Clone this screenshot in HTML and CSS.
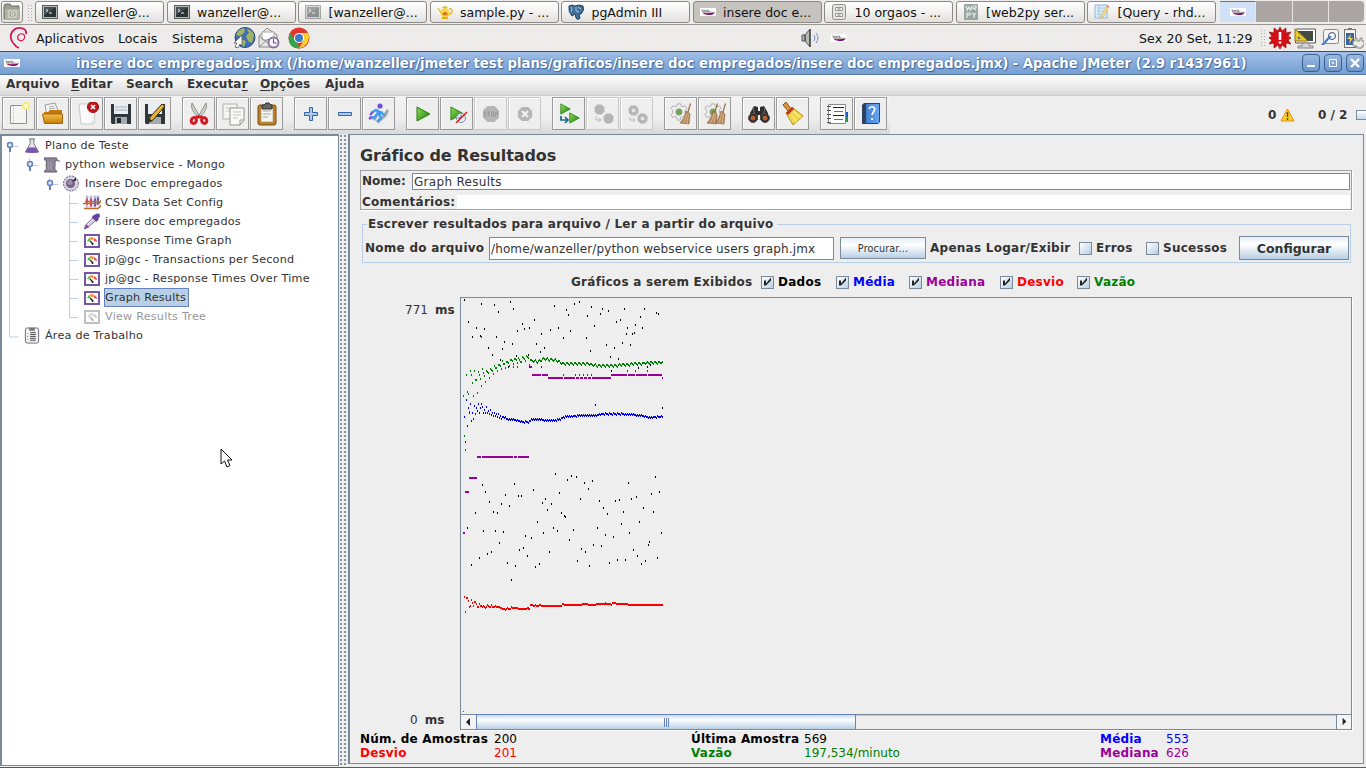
FILE: index.html
```html
<!DOCTYPE html>
<html lang="pt-BR">
<head>
<meta charset="utf-8">
<title>Apache JMeter</title>
<link rel="stylesheet" href="styles.css">
</head>
<body>
<svg class="defs" aria-hidden="true">
  <defs>
    <linearGradient id="gold" x2="0" y2="1"><stop stop-color="#f6c04c"/><stop offset="1" stop-color="#c77b08"/></linearGradient>
    <linearGradient id="grn" x2="1" y2="1"><stop stop-color="#8be04e"/><stop offset="1" stop-color="#1d7a0c"/></linearGradient>
    <linearGradient id="blu" x2="1" y2="0"><stop stop-color="#3f7fd6"/><stop offset="1" stop-color="#6aa6f0"/></linearGradient>
    <symbol id="term" viewBox="0 0 16 16"><rect x=".5" y="1.500" width="15" height="13" fill="#b9bbb6" stroke="#5c605b"/><rect x="2" y="3" width="12" height="10" fill="#2a3436"/><path d="M2 11V3h12z" fill="#465356"/><path d="M4 5l2 1.500-2 1.500M7 9h3" fill="none" stroke="#e8eeee"/></symbol>
    <symbol id="feather" viewBox="0 0 16 16"><rect y="4" width="16" height="8" fill="#fff"/><path d="M1 5l3 1 4-.5 2 2 5 .5-3 1.500-9-1z" fill="#b9b4b4"/><path d="M2 6l1 2M5 6v2M8 6l1 2" stroke="#777" stroke-width=".8"/><path d="M2 8.500q6 1.500 13 0-3 3-7 2.500-4-.5-6-2.500z" fill="#a01068"/><path d="M7 9.500q5 .5 8-1-3 3-7 2.500z" fill="#64108a"/></symbol>
    <symbol id="meter" viewBox="0 0 16 14"><rect x="1" y="1" width="14" height="12" fill="#fff" stroke="#7556a8" stroke-width="2"/><path d="M3 7l2-3 1.500 1.500-1 2z" fill="#41c34b"/><path d="M5 4q3-2 5 0L9 6.500 6.500 5.500z" fill="#f49a38"/><path d="M10 4q3 1 3 4l-3-1z" fill="#ef5350"/><path d="M6 7l3 3" stroke="#222" stroke-width="1.300"/><circle cx="8.500" cy="10" r="1" fill="#222"/></symbol>
    <symbol id="handle" viewBox="0 0 8 12"><circle cx="4" cy="4" r="2.500" fill="#dfe9f7" stroke="#6382bf" stroke-width="1.500"/><path d="M4 6v5" stroke="#6382bf" stroke-width="2"/></symbol>
    <symbol id="stop" viewBox="0 0 18 18"><path d="M5.500 1h7L17 5.500v7L12.500 17h-7L1 12.500v-7z" fill="#b5b5b5"/></symbol>
    <symbol id="play" viewBox="0 0 15 16"><path d="M1 1l13 7L1 15z" fill="url(#grn)" stroke="#277f17"/></symbol>
    <symbol id="gear" viewBox="0 0 20 20"><path d="M8 1h4l.5 2.500 2 .8L17 3l2 3-2 2v3l2 2-2.500 3-2.500-1-2 1-.5 3H8l-.5-3-2-1L3 16l-2-3 2-2V8L1 6l2.500-3L6 4.300l1.500-.8z" fill="#eee" stroke="#aaa"/><circle cx="10" cy="10" r="3.500" fill="#69ad45" stroke="#999"/></symbol>
    <symbol id="broom" viewBox="0 0 12 22"><path d="M11 0l1 1-3 10-1-1z" fill="#9b6b3c"/><path d="M7 8l4 3-1 10-9-1q5-5 6-12z" fill="#b98e62" stroke="#80592f" stroke-width=".6"/><path d="M8 10l-3 10M9.500 11L8 21" stroke="#e0bd93" stroke-width=".7"/></symbol>
  </defs>
</svg>

<header class="tasks">
  <div class="desk"><svg width="18" height="18" viewBox="0 0 18 18"><path d="M1 3l1-2h5l1 2h8v13H1z" fill="#9b9f8f" stroke="#6c705f"/><rect x="2" y="6" width="14" height="10" fill="#b2b6a5"/><rect x="6" y="8" width="7" height="6" fill="#8d917f" stroke="#e5e7dd"/><circle cx="9.500" cy="11" r="1.500" fill="none" stroke="#fff"/></svg></div>
  <i class="grip"></i>
  <div class="task"><svg><use href="#term"/></svg><span>wanzeller@...</span></div>
  <div class="task"><svg><use href="#term"/></svg><span>wanzeller@...</span></div>
  <div class="task dim"><svg><use href="#term"/></svg><span>[wanzeller@...</span></div>
  <div class="task"><svg viewBox="0 0 16 16"><path d="M1 5q0-1 2 2l1 2M12 5q3-1 3 2t-4 4" fill="none" stroke="#e4bd2e" stroke-width="1.500"/><ellipse cx="8" cy="9" rx="4.500" ry="5" fill="#f5d64b"/><path d="M5 4q3-4 6 0z" fill="#e8b923"/><path d="M5 10q3-4 6 0-3 3-6 0z" fill="#e07018"/><rect x="5" y="13" width="6" height="2" fill="#e2ad1e"/></svg><span>sample.py - ...</span></div>
  <div class="task"><svg viewBox="0 0 16 16"><path d="M1 2q3-2 6 0 4-2 8 0 2 4-2 8H11l1 4q-2 3-4 0L7 10 4 12Q0 8 1 2z" fill="#40719b" stroke="#29445e"/><path d="M3 3q2 2 0 5M8 3v4l3 1M10 3l3 2" fill="none" stroke="#a7c5dd"/></svg><span>pgAdmin III</span></div>
  <div class="task on"><svg><use href="#feather"/></svg><span>insere doc e...</span></div>
  <div class="task"><svg viewBox="0 0 16 16"><rect x="1.500" y=".5" width="13" height="15" rx="2" fill="#e5e5e2" stroke="#8e908b"/><path d="M4.500 3.500h7v3h-7zM4.500 9.500h7v3h-7z" fill="#fafafa" stroke="#969893"/><path d="M6.500 5h3M6.500 11h3" stroke="#777"/></svg><span>10 orgaos - ...</span></div>
  <div class="task"><svg viewBox="0 0 16 16"><rect x="1" width="14" height="16" rx="1" fill="#98a5a1"/><path d="M3 2l1.500 4L6 3l1.500 3L9 2M10 2h3v2h-3l3 2M4 14V9h3v2H4M9 9l2 2 2-2M11 11v3" fill="none" stroke="#e7ecea" stroke-width="1.200"/></svg><span>[web2py ser...</span></div>
  <div class="task"><svg viewBox="0 0 16 16"><rect x="1" y="1" width="12" height="13" fill="#dcebf7" stroke="#95b8d6"/><path d="M3 4h8M3 7h7M3 10h5M5 2v11" stroke="#a9cae5"/><path d="M7 12l6-10 2 1-6 10-3 1z" fill="#f6df8e" stroke="#ceb161" stroke-width=".7"/><path d="M13 2l2 1" stroke="#df8b8b" stroke-width="2"/></svg><span>[Query - rhd...</span></div>
  <div class="pager"><b><svg><use href="#feather"/></svg></b><b></b><b></b><b></b></div>
</header>

<nav class="panel">
  <svg class="deb" width="20" height="24" viewBox="0 0 20 24"><path d="M10 14q-2-1-1-4 1-3 5-2 3 2 1 5-2 3-5 1" fill="none" stroke="#d70a53" stroke-width="1.100"/><path d="M17 8q1-5-5-6Q5 1 2 8q-1 6 3 10 2 3 5 4" fill="none" stroke="#d70a53" stroke-width="1.700"/></svg>
  <span class="m1">Aplicativos</span><span class="m2">Locais</span><span class="m3">Sistema</span>
  <svg class="l1" width="22" height="22" viewBox="0 0 22 22"><circle cx="11" cy="10.500" r="10" fill="#426fb0" stroke="#27497b"/><path d="M4 4q5-4 7-2l-1 4-4 3-4-1zM13 2q5 1 7 6l-2 8-4-2-2-5 3-3zM7 12l5 2-2 6-4-3z" fill="#a2b566"/><path d="M8 8v11l-2-2-2 4-3-1 2-4H0z" fill="#fff" stroke="#555" stroke-width=".8"/></svg>
  <svg class="l2" width="22" height="22" viewBox="0 0 22 22"><path d="M1 9l8-8 10 7v12H1z" fill="#e8e8e5" stroke="#858782"/><path d="M4 5h12v8H4z" fill="#fff" stroke="#aaa"/><path d="M1 20l9-8 9 8M1 9l9 7" fill="none" stroke="#8f918c"/><circle cx="15.500" cy="15.500" r="5" fill="#f7f4fb" stroke="#8b719f" stroke-width="1.800"/><path d="M15.500 12v4h3" fill="none" stroke="#624d70"/></svg>
  <svg class="l3" width="22" height="22" viewBox="0 0 22 22"><circle cx="11" cy="11" r="10.500" fill="#e2352b"/><path d="M2 6l6 8 4 7.500Q1 22 .5 11z" fill="#35a44c"/><path d="M11 6h9.500Q23 18 11 21.500l4.500-8z" fill="#fbd22f"/><circle cx="11" cy="11" r="5" fill="#fff"/><circle cx="11" cy="11" r="4" fill="#3f79c5"/></svg>
  <svg class="l4" width="20" height="20" viewBox="0 0 20 20"><path d="M1 7h3l5-6v18l-5-6H1z" fill="#b8bab5" stroke="#555753"/><path d="M4 7v6M9 1v18" stroke="#4d504c" stroke-width="1.600"/><path d="M13 7q2 3 0 6M15 5q4 5 0 10" fill="none" stroke="#6b8fc2"/></svg>
  <svg class="l5" width="16" height="16"><use href="#feather"/></svg>
  <span class="clock">Sex 20 Set, 11:29</span><i class="grip g2"></i>
  <svg class="l6" width="22" height="22" viewBox="0 0 22 22"><path d="M11 0l2 4 4-3v5l5-1-3 4 3 2-3 2 3 4-5-1v5l-4-3-2 4-2-4-4 3v-5l-5 1 3-4-3-2 3-2-3-4 5 1V1l4 3z" fill="#d40f16" stroke="#930b10" stroke-width=".7"/><path d="M11 5v8M11 14.500v2" stroke="#fff" stroke-width="2.600"/></svg>
  <svg class="l7" width="22" height="21" viewBox="0 0 22 21"><path d="M1.500 1h20v14h-20z" fill="#fff" stroke="#555"/><path d="M4 3h15v10H4z" fill="#454b40"/><path d="M1 1l13 12H1z" fill="#e9c929" stroke="#8f7710"/><path d="M4 8l3 3H4z" fill="#665"/><path d="M8 15h7v3h4v2H4v-2h4z" fill="#d3d3d0" stroke="#888"/></svg>
  <svg class="l8" width="20" height="20" viewBox="0 0 20 20"><rect x="3.500" y="1.500" width="15" height="14" rx="2" fill="#f5f5f5" stroke="#888"/><circle cx="12" cy="8" r="3.500" fill="#f5f5f5" stroke="#3f4f68"/><path d="M12 8l-8 9H1l8-9z" fill="#467bc1"/></svg>
  <svg class="l9" width="21" height="21" viewBox="0 0 21 21"><rect x="1.500" y="1.500" width="11" height="18" fill="#f5f5f2" stroke="#75786f"/><rect x="3" y="5" width="8" height="12" fill="#3a66a6"/><path d="M5 0h4v2H5z" fill="#77796f"/><path d="M8 6l-4 5h3l-1 5 4-6H7z" fill="#f9cd4c"/><path d="M12 13v-3h2v3h3v-3h2v3h2v5h-2v2h-5v-2h-4v-5z" fill="#ecece9" stroke="#888"/></svg>
</nav>

<div class="titlebar">
  <svg width="16" height="16"><use href="#feather"/></svg>
  <h1>insere doc empregados.jmx (/home/wanzeller/jmeter test plans/graficos/insere doc empregados/insere doc empregados.jmx) - Apache JMeter (2.9 r1437961)</h1>
  <div class="wins"><i><svg viewBox="0 0 16 16"><path d="M4 11h8" stroke="#fff" stroke-width="2"/></svg></i><i><svg viewBox="0 0 16 16"><path d="M4.500 4.500h7v7h-7zM7.500 7.500h1v1h-1z" fill="none" stroke="#fff"/></svg></i><i><svg viewBox="0 0 16 16"><path d="M4 4l8 8M12 4l-8 8" stroke="#fff" stroke-width="2.400"/></svg></i></div>
</div>

<div class="menubar"><span class="a">Arquivo</span><span class="b"><u>E</u>ditar</span><span class="c">Search</span><span class="d">Executa<u>r</u></span><span class="e"><u>O</u>pções</span><span class="f">Ajuda</span></div>

<div class="toolbar">
  <div class="group">
    <button><svg viewBox="0 0 24 24"><path d="M3.500 3.500h16v18h-16z" fill="#f5f5f4" stroke="#8f918c"/><path d="M6.500 4v17" stroke="#bbb" stroke-dasharray="1 1"/><circle cx="19" cy="4" r="4" fill="#f7eb81"/><circle cx="19" cy="4" r="2" fill="#fffbd8"/></svg></button>
    <button><svg viewBox="0 0 24 24"><path d="M4 3l10-2 4 10-12 3z" fill="#f5f5f5" stroke="#888" stroke-width=".8"/><path d="M8 5l5-1M8 7l6-1" stroke="#aaa"/><path d="M3 10h4l2-2h12v13H3z" fill="#c2780d"/><path d="M1.500 12h20v9.500h-18z" fill="url(#gold)" stroke="#a3670b"/></svg></button>
    <button><svg viewBox="0 0 24 24"><path d="M4 2h16l-1 20H6z" fill="#fafafa" stroke="#c8c8c8"/><path d="M14 21q5-1 6-7l1 7z" fill="#e0e0e0"/><circle cx="18" cy="5" r="5.500" fill="#c3161b" stroke="#961015"/><path d="M16 3l4 4M20 3l-4 4" stroke="#fff" stroke-width="1.600"/></svg></button>
    <button><svg viewBox="0 0 24 24"><path d="M2 2h20v20H3l-1-1z" fill="#30363b"/><path d="M5 2h14v10H5z" fill="#e9eef2"/><path d="M6 5h12M6 8h12" stroke="#a5adb3"/><path d="M6 15h12v7H6z" fill="#a5aaad"/><path d="M8 16h4v5H8z" fill="#252a2e"/></svg></button>
    <button><svg viewBox="0 0 24 24"><path d="M2 2h20v20H3l-1-1z" fill="#30363b"/><path d="M5 2h14v10H5z" fill="#e9eef2"/><path d="M6 15h12v7H6z" fill="#a5aaad"/><path d="M6 20l1-5L19 2l3 2L10 18z" fill="#e8b42b" stroke="#322a16"/><path d="M6 20l1-3 2 2z" fill="#222"/></svg></button>
  </div>
  <div class="group">
    <button><svg viewBox="0 0 24 24"><path d="M5 1q-2 6 5 13l3 1zM19 1q2 6-5 13l-3 1z" fill="#d7d9d7" stroke="#888a85"/><ellipse cx="7" cy="18.500" rx="2.500" ry="3" fill="none" stroke="#d51a22" stroke-width="3" transform="rotate(25 7 18)"/><ellipse cx="17" cy="18.500" rx="2.500" ry="3" fill="none" stroke="#d51a22" stroke-width="3" transform="rotate(-25 17 18)"/><path d="M9 15h6" stroke="#d51a22" stroke-width="3"/></svg></button>
    <button><svg viewBox="0 0 24 24"><path d="M2 2h14v15H2z" fill="#f4f4f3" stroke="#b0b1ad"/><path d="M5 6h8M5 9h5" stroke="#c8c8c5"/><path d="M9 6h14v12l-4 5H9z" fill="#f9f9f8" stroke="#969893"/><path d="M12 10h8M12 13h8M12 16h5" stroke="#c3c4c0"/><path d="M19 23v-5h4z" fill="#fff" stroke="#969893"/></svg></button>
    <button><svg viewBox="0 0 24 24"><rect x="3" y="3" width="18" height="20" rx="2" fill="#be8122" stroke="#794c0d"/><path d="M6 6h12v14H6z" fill="#f4f4f1" stroke="#a49579" stroke-width=".7"/><path d="M8 9h8M8 12h8M8 15h5" stroke="#a9aaa5"/><path d="M7 3h2l2-2h3l2 2h1v4H7z" fill="#646863" stroke="#333"/></svg></button>
  </div>
  <div class="group">
    <button><svg viewBox="0 0 24 24"><path d="M10.500 5.500h3v5h5v3h-5v5h-3v-5h-5v-3h5z" fill="#acc8ea" stroke="#3465a4"/></svg></button>
    <button><svg viewBox="0 0 24 24"><path d="M5.500 10.500h13v3h-13z" fill="#acc8ea" stroke="#3465a4"/></svg></button>
    <button><svg viewBox="0 0 24 24"><path d="M11 22l2-6 3-3 4-6 2 2-3 6-3 2zM5 17l6-3-3 5z" fill="#a5a5a5"/><circle cx="13" cy="4" r="2.600" fill="#6a50e4"/><path d="M10 7l5 3-2 4-4-1z" fill="#5f8df0"/><path d="M4 11l5-3 3 2 4 1M13 10l5 3M10 12l-2 3-6 1M12 12l2 4-4 4" fill="none" stroke="#3f9df5" stroke-width="2.600"/><path d="M3 13l3-3M2 17l3-2" stroke="#8d4fe0" stroke-width="2.400"/></svg></button>
  </div>
  <div class="group">
    <button><svg viewBox="0 0 24 24"><use href="#play" x="5" y="4" width="15" height="16"/></svg></button>
    <button><svg viewBox="0 0 24 24"><use href="#play" x="5" y="4" width="14" height="15"/><circle cx="16" cy="16" r="4.500" fill="#e9f0f5" stroke="#88a"/><path d="M13 16h3v-3" stroke="#457" fill="none"/><path d="M11 21L22 10" stroke="#e02020" stroke-width="1.600"/></svg></button>
    <button class="off"><svg viewBox="0 0 24 24"><use href="#stop" x="3" y="3" width="18" height="18"/><path d="M7 10H5v2h2v2H5M8 10h3M9.500 10v4M12.500 10h2v4h-2zM16.500 15v-5h2v2.500h-2" fill="none" stroke="#999"/></svg></button>
    <button class="off"><svg viewBox="0 0 24 24"><use href="#stop" x="4" y="4" width="16" height="16"/><path d="M9 9l6 6M15 9l-6 6" stroke="#eee" stroke-width="2.400"/></svg></button>
  </div>
  <div class="group">
    <button><svg viewBox="0 0 24 24"><use href="#play" x="3" y="1" width="11" height="12"/><use href="#play" x="12" y="10" width="11" height="12"/><path d="M4 14v4h6m-2-3l3 3-3 3" fill="none" stroke="#196a86" stroke-width="1.700"/></svg></button>
    <button class="off"><svg viewBox="0 0 24 24"><use href="#stop" x="3" y="2" width="11" height="11"/><use href="#stop" x="12" y="11" width="11" height="11"/><path d="M5 14v4h5m-2-2l2 2-2 2" fill="none" stroke="#bbb"/></svg></button>
    <button class="off"><svg viewBox="0 0 24 24"><use href="#stop" x="3" y="3" width="11" height="11"/><use href="#stop" x="12" y="11" width="11" height="11"/><path d="M7 7l3 3M10 7l-3 3M16 15l3 3M19 15l-3 3" stroke="#eee" stroke-width="1.500"/><path d="M5 15v3h5m-2-2l2 2-2 2" fill="none" stroke="#bbb"/></svg></button>
  </div>
  <div class="group">
    <button><svg viewBox="0 0 24 24"><use href="#gear" x="1" y="1" width="18" height="18"/><use href="#broom" x="10" y="1" width="12" height="22"/></svg></button>
    <button><svg viewBox="0 0 24 24"><use href="#gear" x="1" y="1" width="18" height="18"/><use href="#broom" x="3" y="1" width="12" height="22"/><use href="#broom" x="11" y="1" width="12" height="22"/></svg></button>
  </div>
  <div class="group">
    <button><svg viewBox="0 0 24 24"><path d="M3 11l4-7 4 1v4h2V5l4-1 4 7v7h-8v-5h-2v5H3z" fill="#2d2d2c"/><path d="M6 6l2 8M18 6l-2 8" stroke="#737370"/><circle cx="6" cy="16" r="4.500" fill="#2a2a2a" stroke="#555"/><circle cx="18" cy="16" r="4.500" fill="#2a2a2a" stroke="#555"/><circle cx="6" cy="16" r="2.500" fill="#b8602f"/><circle cx="18" cy="16" r="2.500" fill="#b8602f"/></svg></button>
    <button><svg viewBox="0 0 24 24"><path d="M2 3l3-3 5 7-3 2z" fill="#db9541" stroke="#8d5316"/><path d="M5 11l6-6 11 9-10 9z" fill="#f1d749" stroke="#b39216"/><path d="M5 11l6-6 2 2-6 6z" fill="#c62e28"/><path d="M10 13l6 7M13 10l7 6" stroke="#fff2a0"/></svg></button>
  </div>
  <div class="group">
    <button><svg viewBox="0 0 24 24"><path d="M3.500 2.500h17v19h-17z" fill="#fff" stroke="#888"/><path d="M4 4v17" stroke="#555" stroke-width="4" stroke-dasharray="1 3"/><path d="M8 5.500h11M8 13.500h11" stroke="#222"/><path d="M9 9.500h9M9 17.500h9" stroke="#3b77d0"/><path d="M21 10h2v5h-2z" fill="#2458c5"/><path d="M21 15h2v5h-2z" fill="#1d9c38"/></svg></button>
    <button><svg viewBox="0 0 24 24"><path d="M3 3l2-2h16v19l-2 2H3z" fill="#2e435b"/><path d="M7 2h13v19H7z" fill="url(#blu)"/><path d="M10 7q1-3 4-2t1 4-2 4M13 16v2" fill="none" stroke="#fff" stroke-width="1.700"/></svg></button>
  </div>
  <div class="counts"><span class="n1">0</span><svg width="15" height="14" viewBox="0 0 15 14"><path d="M7.500 1L14 13H1z" fill="#fad32c" stroke="#ec8a0a" stroke-linejoin="round"/><path d="M7.500 4v5M7.500 10v2" stroke="#7a4a10" stroke-width="1.600"/></svg><span class="n2">0 / 2</span><i></i></div>
</div>

<main class="body">
  <aside class="tree">
    <svg class="lines" width="110" height="210" viewBox="0 0 110 210"><path d="M9.500 14v187h9M9.500 10.500h9M29.500 22v12M29.500 29.500h9M49.500 42v12M49.500 48.500h9M69.500 58v123.500h9M69.500 67.500h9M69.500 86.500h9M69.500 105.500h9M69.500 124.500h9M69.500 143.500h9M69.500 162.500h9" fill="none" stroke="#b8cfe5"/><use href="#handle" x="6" y="5" width="8" height="12"/><use href="#handle" x="26" y="24" width="8" height="12"/><use href="#handle" x="46" y="43" width="8" height="12"/></svg>
    <ul>
      <li class="d0"><svg viewBox="0 0 16 18"><path d="M6 2v5L1 16h14L10 7V2" fill="#e5e3ea" stroke="#777"/><path d="M4 11h8l3 5q-6 2-14 0z" fill="#7755b5"/><path d="M5 2h6" stroke="#666"/></svg><span>Plano de Teste</span></li>
      <li class="d1"><svg class="wide" viewBox="0 0 18 18"><path d="M1 2h13v2l-2 1v9l2 2v1H1v-1l2-2V5L1 4z" fill="#8b8493" stroke="#5e5866"/><path d="M5 6v8M8 6v8" stroke="#a39cad" stroke-width="1.500"/><path d="M12 11V6q3-3 5 0" fill="none" stroke="#867e90" stroke-width="1.500"/></svg><span>python webservice - Mongo</span></li>
      <li class="d2"><svg viewBox="0 0 16 16"><circle cx="8" cy="8" r="7.500" fill="#d7cfe2" stroke="#6e5c7e" stroke-dasharray="2 1"/><circle cx="7.500" cy="8" r="4.500" fill="#756285"/><circle cx="7" cy="7" r="2.500" fill="#9e8db0"/><path d="M9 6l4-4v3z" fill="#111"/></svg><span>Insere Doc empregados</span></li>
      <li class="d3"><svg class="wide" viewBox="0 0 18 16"><path d="M4 1v12M8 1v12M12 1v12M15 1v10" stroke="#c0bad3" stroke-width="2.600"/><path d="M4 4v6M8 4v8" stroke="#ce4571" stroke-width="2"/><path d="M12 4v8M15 3v7" stroke="#5d5cc2" stroke-width="2"/><path d="M0 9h16l2-3M1 14h14l3-3M2 7h14" fill="none" stroke="#bd6f2a" stroke-width="1.700"/></svg><span>CSV Data Set Config</span></li>
      <li class="d3"><svg class="wide" viewBox="0 0 18 18"><path d="M1 17l1-4L11 4l3 3-9 8z" fill="#ded5e8" stroke="#7d6b90"/><path d="M1 17l2-5 3 3z" fill="#774cad"/><path d="M10 3l5 5M12 5l3-3" stroke="#6343a0" stroke-width="4"/><circle cx="15" cy="3" r="2.500" fill="#6343a0"/></svg><span>insere doc empregados</span></li>
      <li class="d3"><svg class="met"><use href="#meter"/></svg><span>Response Time Graph</span></li>
      <li class="d3"><svg class="met"><use href="#meter"/></svg><span>jp@gc - Transactions per Second</span></li>
      <li class="d3"><svg class="met"><use href="#meter"/></svg><span>jp@gc - Response Times Over Time</span></li>
      <li class="d3"><svg class="met"><use href="#meter"/></svg><span class="sel">Graph Results</span></li>
      <li class="d3 gray"><svg class="met"><use href="#meter"/></svg><span>View Results Tree</span></li>
      <li class="d0"><svg viewBox="0 0 16 18"><rect x="1" y="1" width="14" height="16" rx="2" fill="#f2f2f5" stroke="#6c6573"/><path d="M5 1h6v3H5z" fill="#777"/><path d="M6 6h6M6 8h6M6 10h6M6 12h6M6 14h6" stroke="#444"/><path d="M3 7h1M3 10h1M3 13h1" stroke="#3aa63a"/></svg><span>Área de Trabalho</span></li>
    </ul>
    <svg class="cursor" width="13" height="20" viewBox="0 0 13 20"><path d="M1 1v15l3.500-3 2.500 6 3-1.500-2.500-5.500H12z" fill="#fff" stroke="#111"/></svg>
  </aside>
  <div class="splitter"></div>
  <section class="pane">
    <h2>Gráfico de Resultados</h2>
    <div class="namebox">
      <div class="row"><label class="x1">Nome:</label><div class="field">Graph Results</div></div>
      <div class="row com"><label class="x2">Comentários:</label><div class="blank"></div></div>
    </div>
    <div class="filebox">
      <div class="legend">Escrever resultados para arquivo / Ler a partir do arquivo</div>
      <div class="filerow">
        <label class="x3">Nome do arquivo</label><div class="field path">/home/wanzeller/python webservice users graph.jmx</div>
        <button class="btn small">Procurar...</button>
        <label class="x4">Apenas Logar/Exibir</label><i class="box"></i><label class="x5">Erros</label><i class="box"></i><label class="x6">Sucessos</label>
        <button class="btn conf">Configurar</button>
      </div>
    </div>
    <div class="shows">
      <label class="s0">Gráficos a serem Exibidos</label>
      <i class="box on"></i><label class="s1 black">Dados</label>
      <i class="box on"></i><label class="s2 blue">Média</label>
      <i class="box on"></i><label class="s3 purple">Mediana</label>
      <i class="box on"></i><label class="s4 red">Desvio</label>
      <i class="box on"></i><label class="s5 green">Vazão</label>
    </div>
    <div class="graph">
      <div class="axis"><div class="top"><span>771</span><b>ms</b></div><div class="bot"><span>0</span><b>ms</b></div></div>
      <div class="view">
        <svg id="plot" width="890" height="416" viewBox="18 9 2670 1248" shape-rendering="crispEdges"></svg>
        <div class="scroll"><i class="arr"><svg viewBox="0 0 15 14"><path d="M9 3v8L5 7z" fill="#222"/></svg></i><div class="thumb"></div><i class="arr r"><svg viewBox="0 0 15 14"><path d="M6 3v8l4-4z" fill="#222"/></svg></i></div>
      </div>
    </div>
    <div class="stats">
      <b class="black">Núm. de Amostras</b><span class="black">200</span><b class="black">Última Amostra</b><span class="black">569</span><b class="blue">Média</b><span class="blue">553</span>
      <b class="red">Desvio</b><span class="red">201</span><b class="green">Vazão</b><span class="green">197,534/minuto</span><b class="purple">Mediana</b><span class="purple">626</span>
    </div>
  </section>
</main>
<script src="plot.js"></script>
</body>
</html>
```
FILE: styles.css
```css
* { box-sizing: border-box; }
body { margin: 0; width: 1366px; height: 768px; overflow: hidden; background: #eee; color: #333; font: 12px "DejaVu Sans", sans-serif; display: flex; flex-direction: column; white-space: nowrap; }
.defs { position: absolute; width: 0; height: 0; }
svg { display: block; flex: none; }
button { font: inherit; padding: 0; margin: 0; }
u { text-underline-offset: 2px; }

.tasks { height: 25px; flex: none; display: flex; align-items: flex-start; padding-top: 1px; background: #edeceb; color: #111; border-bottom: 1px solid #999794; }
.desk { width: 22px; height: 22px; margin-left: 1px; border: 1px solid #8d8a86; border-radius: 3px; display: flex; align-items: center; justify-content: center; background: linear-gradient(#fff, #e5e3e1); }
.grip { width: 5px; height: 18px; margin: 3px 3px 0 4px; background: radial-gradient(circle, #aaa 30%, transparent 40%) 0 0 / 3px 3px; }
.task { width: 129px; height: 22px; margin-right: 2.500px; padding-left: 6px; border: 1px solid #8d8a86; border-radius: 3px; display: flex; align-items: center; background: linear-gradient(#fff, #f2f1f0 50%, #e3e1df); font-size: 12.500px; }
.task svg { width: 16px; height: 16px; margin-right: 7.500px; }
.task.on { background: #c6c3bf; }
.task.dim svg { opacity: .5; }
.pager { display: flex; width: 144px; height: 21px; margin-left: 1.500px; background: #aaa5a1; border-radius: 0 4px 4px 0; overflow: hidden; }
.pager b { flex: 1; border-right: 1px solid #e8e6e4; display: flex; align-items: center; justify-content: center; }
.pager b:last-child { border: 0; }
.pager b:first-child { background: #d0e0f7; border-top: 1px solid #4a7ab5; }
.pager svg { width: 16px; height: 16px; }

.panel { height: 26px; flex: none; display: flex; align-items: center; background: #edeceb; color: #111; font-size: 12.600px; }
.deb { margin-left: 9px; width: 20px; }
.m1 { margin-left: 7px; width: 82px; } .m2 { width: 54px; } .m3 { width: 62px; letter-spacing: .100px; }
.l1 { margin-right: 2px; } .l2 { margin-right: 8px; } .l3 { margin-right: 491px; } .l4 { margin-right: 10px; }
.l5 { margin-right: 292px; } .clock { width: 117px; letter-spacing: .100px; } .g2 { margin: 0 4px; }
.l6 { margin-right: 3px; } .l7 { margin-right: 4px; } .l8 { margin-right: 3px; }

.titlebar { height: 24px; flex: none; display: flex; align-items: center; border-top: 1px solid #3c4f6c; border-bottom: 1px solid #5478a8; background: linear-gradient(#a0bfe7, #769fd2); }
.titlebar > svg { margin-left: 4px; }
.titlebar h1 { margin: 0 0 0 56px; width: 1226px; font-size: 13.300px; letter-spacing: -.055px; font-weight: bold; color: #fff; text-shadow: 0 0 2px #3e669c, 1px 1px 1px #3e669c; }
.wins { display: flex; gap: 4px; }
.wins i { width: 18px; height: 18px; border: 1px solid #3a6090; border-radius: 4px; background: linear-gradient(#9ab9e1, #6d96ca); }
.wins svg { width: 16px; height: 16px; }

.menubar { height: 21px; flex: none; display: flex; align-items: center; padding: 0 0 3px 6px; border-bottom: 1px solid #ccc; background: linear-gradient(#fff, #dadada); font-weight: bold; letter-spacing: .150px; }
.menubar .a { width: 65px; } .menubar .b { width: 55px; } .menubar .c { width: 61px; } .menubar .d { width: 73px; } .menubar .e { width: 65px; }

.toolbar { height: 38px; flex: none; display: flex; align-items: flex-start; padding: 1px 0 0 2px; background: linear-gradient(90deg, transparent 890px, #eee 890px), linear-gradient(#f2f2f2, #eee 60%, #d9d9d9); }
.group { display: flex; gap: 1px; margin-right: 11px; }
.group button { width: 33px; height: 33px; border: 1px solid #999; background: #eee; display: flex; align-items: center; justify-content: center; box-shadow: inset 1px 1px #fff; }
.group button svg { width: 24px; height: 24px; }
.group button.off { border-color: #c8c8c8; }
.counts { margin-left: 370px; margin-top: 11px; display: flex; align-items: center; font-weight: bold; }
.n1 { width: 12px; } .n2 { margin-left: 23px; width: 38px; }
.counts i { width: 10px; height: 10px; border: 1px solid #7a8a99; border-right: 0; background: linear-gradient(#fff, #c5d8ec); }

.body { flex: 1; min-height: 0; display: flex; border-bottom: 1px solid #465f7c; }
.tree { position: relative; width: 339px; background: #fff; border: solid #7a8a99; border-width: 2px 1px 1px 2px; height: 632px; }
.lines { position: absolute; left: -2px; top: 0; }
.tree ul { list-style: none; margin: 0; padding: 0; }
.tree li { height: 19px; display: flex; align-items: center; position: relative; font-size: 11.200px; letter-spacing: .220px; }
.tree li svg { width: 16px; height: 17px; margin-right: 4px; }
.tree li svg.wide { width: 18px; margin: 0 4px 0 -1px; }
.tree li svg.met { height: 14px; margin-right: 5px; }
.d0 { padding-left: 22px; } .d1 { padding-left: 42px; } .d2 { padding-left: 61px; } .d3 { padding-left: 82px; }
.tree li.d0 svg { margin-right: 5px; }
.tree li.d2 svg { margin-right: 6px; }
.sel { background: #b8cfe5; border: 1px solid #6382bf; height: 19px; line-height: 17px; width: 85px; margin-left: -1px; }
.gray { color: #999; } .gray svg { filter: grayscale(1) opacity(.4); }
.cursor { position: absolute; left: 218px; top: 312px; }
.splitter { width: 9px; background: radial-gradient(circle, #8a929b 28%, transparent 45%) 4px 0 / 4px 4px repeat; background-color: #eee; }

.pane { flex: 1; height: 630px; margin-right: 2px; border: solid #7a8a99; border-width: 1px 1px 1px 2px; padding: 0 11px 0 10px; min-width: 0; }
h2 { margin: 11px 0 4px; height: 20px; line-height: 20px; font-size: 16px; letter-spacing: -.100px; font-weight: bold; }
.namebox { width: 992px; height: 40px; border: 1px solid #a0a0a0; box-shadow: 1px 1px #fff; padding: 1px 1px 0; margin-bottom: 14px; }
.row { display: flex; align-items: center; height: 18px; }
label, .legend { font-weight: bold; letter-spacing: .260px; }
.x1 { width: 50px; letter-spacing: 0; }
.field { flex: 1; height: 17px; line-height: 16px; border: 1px solid #7a8a99; background: #fff; padding-left: 1px; letter-spacing: .300px; }
.com { margin-top: 5px; height: 14px; }
.x2 { width: 95px; }
.blank { flex: 1; height: 14px; background: #fff; }
.filebox { width: 989px; height: 39px; margin-left: 2px; border: 1px solid #b8cfe5; }
.legend { width: 410px; margin: -8px 0 0 4px; height: 15px; line-height: 15px; padding-left: 1px; background: #eee; }
.filerow { display: flex; align-items: center; height: 24px; margin-top: 4px; }
.x3 { width: 126px; padding-left: 2px; }
.path { flex: none; width: 345px; height: 23px; line-height: 22px; margin-right: 6px; letter-spacing: .120px; }
.btn { border: 1px solid #7a8a99; background: linear-gradient(#e6eef7, #fff 35%, #b8cfe5); color: #333; height: 23px; text-align: center; }
.small { width: 86px; height: 22px; font-size: 9.600px; letter-spacing: .150px; margin-right: 4px; }
.x4 { width: 149px; } .x5 { width: 50px; margin-left: 4px; } .x6 { width: 75px; margin-left: 4px; }
.conf { width: 110px; height: 24px; font-weight: bold; font-size: 12.500px; margin-left: 1px; }
.box { flex: none; position: relative; width: 13px; height: 13px; border: 1px solid #7a8a99; background: linear-gradient(135deg, #fff, #b8cfe5); }
.box.on::after { content: ""; position: absolute; inset: 0; background: #222; clip-path: polygon(2px 4px, 4px 4px, 4px 7px, 9px 1px, 9px 4px, 4px 9px, 2px 9px); }
.shows { display: flex; align-items: center; height: 16px; margin: 11px 0 7px 211px; }
.shows label { padding-left: 4px; }
.s0 { width: 190px; } .shows .s0 { padding: 0; } .s1 { width: 62px; } .s2 { width: 60px; } .s3 { width: 78px; } .s4 { width: 64px; }
.black { color: #000; } .blue { color: #00f; } .purple { color: #909; } .red { color: #f00; } .green { color: #008000; }
.graph { display: flex; height: 433px; }
.axis { width: 100px; display: flex; flex-direction: column; justify-content: space-between; padding: 6px 0 3px; }
.axis div { display: flex; height: 14px; }
.axis span { margin-right: 7px; }
.top { margin-left: 45px; } .bot { margin-left: 50px; }
.view { width: 892px; border: 1px solid #7a8a99; box-shadow: 1px 1px #fff; }
.scroll { height: 15px; border-top: 1px solid #7a8a99; display: flex; box-shadow: inset 0 1px #b8cfe5; }
.arr { width: 15px; height: 14px; background: #f4f4f4; } .arr.r { margin-left: auto; border-left: 1px solid #7a8a99; }
.thumb { width: 380px; height: 15px; margin-top: -1px; border: 1px solid #6382bf; border-bottom-width: 0; background: linear-gradient(90deg, transparent 187px, #6382bf 187px 188px, transparent 188px 189px, #6382bf 189px 190px, transparent 190px 191px, #6382bf 191px 192px, transparent 192px) 0 3px / 100% 9px no-repeat, linear-gradient(#c8daec, #fff 35%, #b8cfe5); }
.stats { display: grid; grid-template-columns: 134px 197px 113px 296px 66px 80px; grid-auto-rows: 14px; line-height: 14px; margin-top: 2px; }
.stats b { letter-spacing: .200px; }
```
FILE: plot.js
```js
// Each point list is "x,y"; one device pixel is three plot units.
const NS = "http://www.w3.org/2000/svg";
const plot = document.getElementById("plot");

function draw(color, d) {
  const p = document.createElementNS(NS, "path");
  p.setAttribute("fill", color);
  p.setAttribute("d", d);
  plot.appendChild(p);
}
const cell = (x, y) => {
  const px = Math.floor(x / 3) * 3, py = Math.round((y - 3) / 3) * 3;
  return `M${px} ${py}h3v6h-3z`;
};
const dots = (color, list, dy = 0) =>
  draw(color, list.trim().split(/\s+/).map(s => s.split(",").map(Number)).map(([x, y]) => cell(x, y + dy)).join(""));
const bars = (color, list) =>
  draw(color, list.map(([a, b, y]) => `M${a} ${y - 3}h${b - a}v6h${a - b}z`).join(""));

// A drifting mean line: interpolated between knots, with a repeating ripple.
function drift(color, knots, ripple) {
  let d = "";
  for (let i = 1; i < knots.length; i++) {
    const [x0, y0] = knots[i - 1], [x1, y1] = knots[i];
    for (let x = x0; x < x1; x += 3) {
      const y = y0 + (y1 - y0) * (x - x0) / (x1 - x0);
      d += cell(x, y + ripple[(x / 3 | 0) % ripple.length]);
    }
  }
  draw(color, d);
}

dots("#000", `80,27 118,30 130,51 167,21 175,42 40,81 65,99 88,102 53,126 76,123 124,126 202,87 208,102 187,108 223,99 148,141 142,162 172,147 100,159 112,180 136,195 184,183 220,180 196,201 160,216 298,33 334,45 340,60 358,27 373,21 397,63 409,36 238,75 286,105 310,99 346,108 259,117 325,129 394,129 418,93 244,147 268,159 256,171 406,168 436,57 442,42 460,48 508,42 568,42 604,54 610,57 556,66 484,81 496,75 541,90 517,99 562,99 514,117 532,117 538,114 502,144 454,150 478,159 526,150 466,186 490,192 550,219 577,216 586,210 469,228 421,330 622,339 28,16`);
dots("#000", `82,105 178,102 91,126 103,156 115,186 127,189 139,162 151,135 163,168 190,138 199,138 61,189 37,234 85,243 121,243 145,246 133,279 97,312 109,306 73,324 49,345 157,339 181,348 169,390 235,120 247,216 262,159 271,147 277,180 289,162 301,72 313,129 319,189 328,198 331,201 337,90 349,78 364,81 376,147 388,99 400,117 412,93 211,258 229,264 205,294 193,300 217,318 241,351 253,342 265,249 283,306 295,234 307,243 343,270 355,240 367,333 379,297 391,306 403,348 415,285 427,234 433,153 445,174 457,192 439,288 451,255 475,261 463,339 481,153 493,150 499,222 505,186 487,330 511,330 520,99 529,147 544,141 523,249 535,300 547,318 553,216 559,342 565,174 571,333 580,285 583,276 589,132 595,186 601,81 607,324 613,126 619,249`, 465);
dots("#008000", `25,303 28,423 31,465 34,240 37,291 40,297 43,351 46,228 49,240 52,264 55,303 58,228 61,255 64,255 67,294 70,231 73,240 76,252 79,273 82,222 85,234 88,243 91,261 94,228 97,231 100,234 103,249 106,222 109,225 112,228 115,237 118,213 121,219 124,219 127,228 130,210 133,210 136,213 139,222 142,198 145,207 148,207 151,219 154,201 157,201 160,204 163,213 166,195 169,195 172,198 175,207 178,192 181,192 184,195 187,204 190,189 193,195 196,201 199,201 202,186 205,189 208,192 211,198 214,183 217,186 220,189 223,210`);
drift("#008000", [[225,198],[249,200],[264,192],[300,196],[324,207],[354,207],[393,207],[432,213],[480,212],[540,207],[624,202]], [-3,0,3,-2]);
dots("#00f", `34,315 28,366 31,441 37,393 40,339 43,354 46,327 49,378 52,354 55,372 58,333 61,357 64,339 67,348 70,327 73,354 76,339 79,327 82,336 85,354 88,345 91,354 94,336 97,354 100,348 103,357 106,345 109,360 112,354 115,363 118,354 121,363 124,357 127,366 130,357 133,369 136,363 139,372`);
drift("#00f", [[141,366],[160,373],[180,375],[204,381],[222,381],[228,372],[252,374],[285,377],[309,374],[330,366],[380,361],[420,362],[441,357],[498,357],[540,360],[585,367],[624,365]], [-1,2,-2,1]);
bars("#909", [[24,30,714],[30,42,591],[42,66,549],[66,78,486],[81,174,486],[177,186,486],[189,222,486],[222,231,216],[231,258,240],[261,279,240],[279,324,249],[327,360,249],[363,372,249],[375,384,249],[387,396,249],[399,408,249],[411,468,249],[468,516,240],[519,540,240],[543,576,240],[579,621,240]]);
dots("#909", `79,126 175,216 187,216 259,216 325,240 361,240 373,240 385,240 397,240 409,240 517,228 541,228 577,228 622,249`);
dots("#f00", `28,441 31,486 34,444 37,444 40,453 43,471 46,468 49,450 52,459 55,468 58,456 61,456 64,462 67,471 70,471 73,462 76,468 79,468 82,471 85,468 88,471 91,474 94,471 97,465 100,468 103,471 106,471 109,465 112,471 115,471 118,471 121,468 124,471 127,471 130,471 133,471 136,474 139,474 142,477 145,477 148,477 151,480 154,477 157,474 160,477 163,477 166,477 169,471 450,459 480,459`, 465);
draw("#f00", "M24 1248h3v3h-3z");
bars("#f00", [[171,189,939],[189,216,942],[216,221,939],[219,225,942],[225,234,930],[234,240,933],[240,243,930],[243,251,933],[251,258,930],[258,321,933],[321,327,927],[327,381,930],[381,399,927],[399,423,930],[423,468,927],[468,471,930],[471,483,924],[483,519,927],[519,624,930]]);
```
